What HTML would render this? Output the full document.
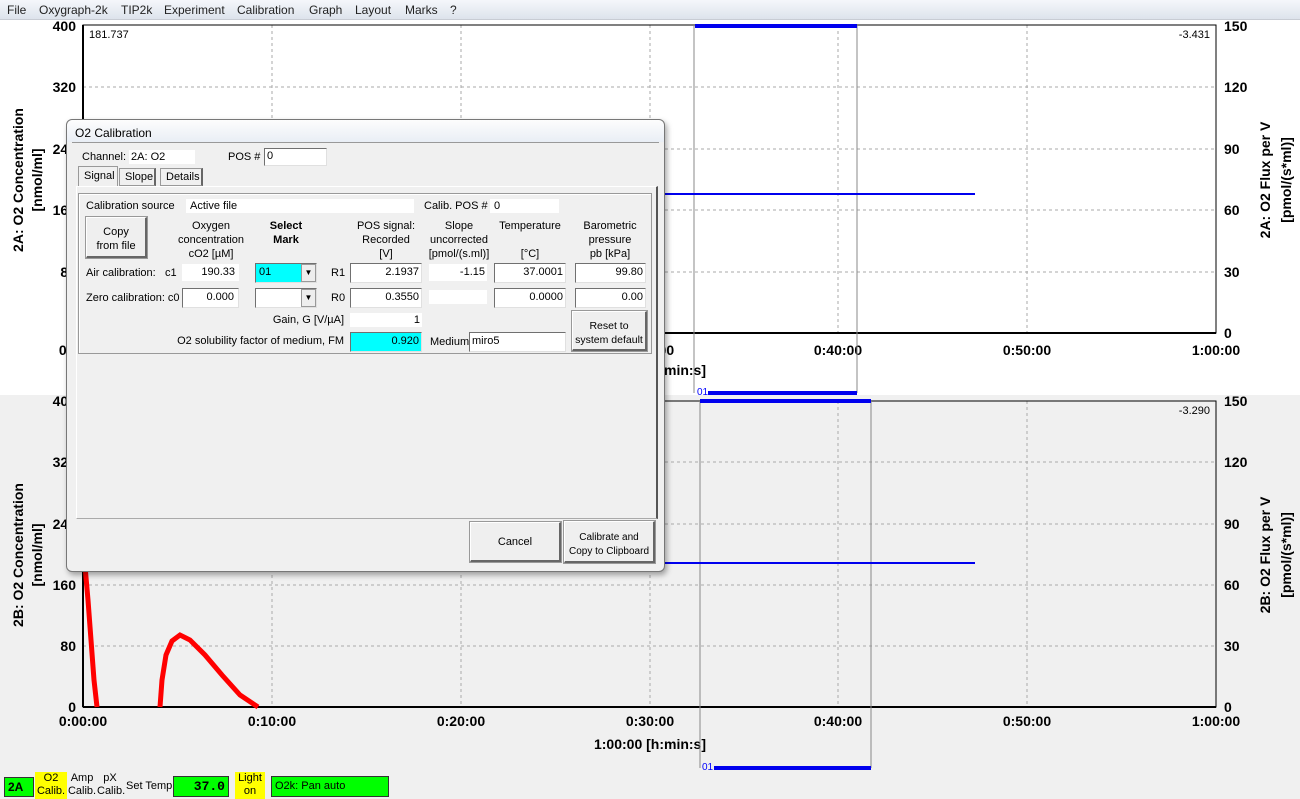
<!DOCTYPE html>
<html><head><meta charset="utf-8"><style>
*{margin:0;padding:0;box-sizing:border-box}
body{width:1300px;height:799px;overflow:hidden;background:#fff;font-family:"Liberation Sans",sans-serif;font-size:11px;position:relative;color:#000}
.a{position:absolute}
.menu{left:0;top:0;width:1300px;height:20px;background:linear-gradient(#f5f7fb,#dde3ec);border-bottom:1px solid #c8ccd4;font-size:12px;color:#222}
.menu span{position:absolute;top:3px}
.dlg{left:66px;top:119px;width:599px;height:453px;background:#f0f0f0;border:1px solid #777;border-radius:6px;box-shadow:2px 3px 6px rgba(0,0,0,.35)}
.tb{background:linear-gradient(#fdfdfd,#e9eef5);}
.w{background:#fff;position:absolute;text-align:right;padding-right:2px;line-height:17px}
.sunk{border-top:1px solid #707070;border-left:1px solid #707070;border-right:1px solid #e0e0e0;border-bottom:1px solid #e0e0e0}
.btn{position:absolute;background:#efefef;border:1px solid #fff;border-right:2px solid #666;border-bottom:2px solid #666;outline:1px solid #999;text-align:center;font-size:11px;white-space:nowrap}
.c{text-align:center;position:absolute;line-height:14px}
</style></head><body>
<div class="a menu">
<span style="left:7px">File</span><span style="left:39px">Oxygraph-2k</span><span style="left:121px">TIP2k</span><span style="left:164px">Experiment</span><span style="left:237px">Calibration</span><span style="left:309px">Graph</span><span style="left:355px">Layout</span><span style="left:405px">Marks</span><span style="left:450px">?</span>
</div>
<svg class="a" style="left:0;top:20px" width="1300" height="779" viewBox="0 20 1300 779">
<rect x="0" y="395" width="1300" height="375" fill="#f0f0f0"/>
<g stroke="#aaa" stroke-dasharray="3,3" stroke-width="1">
<line x1="272" y1="25" x2="272" y2="333"/><line x1="461" y1="25" x2="461" y2="333"/><line x1="650" y1="25" x2="650" y2="333"/><line x1="838" y1="25" x2="838" y2="333"/><line x1="1027" y1="25" x2="1027" y2="333"/>
<line x1="83" y1="87" x2="1216" y2="87"/><line x1="83" y1="149" x2="1216" y2="149"/><line x1="83" y1="210" x2="1216" y2="210"/><line x1="83" y1="272" x2="1216" y2="272"/>
<line x1="272" y1="401" x2="272" y2="707"/><line x1="461" y1="401" x2="461" y2="707"/><line x1="650" y1="401" x2="650" y2="707"/><line x1="838" y1="401" x2="838" y2="707"/><line x1="1027" y1="401" x2="1027" y2="707"/>
<line x1="83" y1="462" x2="1216" y2="462"/><line x1="83" y1="524" x2="1216" y2="524"/><line x1="83" y1="585" x2="1216" y2="585"/><line x1="83" y1="646" x2="1216" y2="646"/>
</g>
<g stroke="#000" fill="none">
<rect x="83" y="25" width="1133" height="308" stroke-width="1"/>
<line x1="83" y1="333" x2="1216" y2="333" stroke-width="2"/>
<rect x="83" y="401" width="1133" height="306" stroke-width="1"/>
<line x1="83" y1="707" x2="1216" y2="707" stroke-width="2"/>
<line x1="83" y1="25" x2="83" y2="333" stroke-width="2"/><line x1="83" y1="401" x2="83" y2="707" stroke-width="2"/>
</g>
<g font-weight="bold" font-size="14" text-anchor="end">
<text x="76" y="31">400</text><text x="76" y="92">320</text><text x="76" y="154">240</text><text x="76" y="215">160</text><text x="76" y="277">80</text><text x="76" y="338">0</text>
<text x="76" y="406">400</text><text x="76" y="467">320</text><text x="76" y="529">240</text><text x="76" y="590">160</text><text x="76" y="651">80</text><text x="76" y="712">0</text>
</g>
<g font-weight="bold" font-size="14">
<text x="1224" y="31">150</text><text x="1224" y="92">120</text><text x="1224" y="154">90</text><text x="1224" y="215">60</text><text x="1224" y="277">30</text><text x="1224" y="338">0</text>
<text x="1224" y="406">150</text><text x="1224" y="467">120</text><text x="1224" y="529">90</text><text x="1224" y="590">60</text><text x="1224" y="651">30</text><text x="1224" y="712">0</text>
</g>
<g font-weight="bold" font-size="14" text-anchor="middle">
<text x="83" y="355">0:00:00</text><text x="650" y="355">0:30:00</text><text x="838" y="355">0:40:00</text><text x="1027" y="355">0:50:00</text><text x="1216" y="355">1:00:00</text>
<text x="650" y="375">1:00:00 [h:min:s]</text>
<text x="83" y="726">0:00:00</text><text x="272" y="726">0:10:00</text><text x="461" y="726">0:20:00</text><text x="650" y="726">0:30:00</text><text x="838" y="726">0:40:00</text><text x="1027" y="726">0:50:00</text><text x="1216" y="726">1:00:00</text>
<text x="650" y="749">1:00:00 [h:min:s]</text>
<text transform="translate(23,180) rotate(-90)">2A: O2 Concentration</text>
<text transform="translate(42,180) rotate(-90)">[nmol/ml]</text>
<text transform="translate(1270,180) rotate(-90)">2A: O2 Flux per V</text>
<text transform="translate(1291,180) rotate(-90)">[pmol/(s*ml)]</text>
<text transform="translate(23,555) rotate(-90)">2B: O2 Concentration</text>
<text transform="translate(42,555) rotate(-90)">[nmol/ml]</text>
<text transform="translate(1270,555) rotate(-90)">2B: O2 Flux per V</text>
<text transform="translate(1291,555) rotate(-90)">[pmol/(s*ml)]</text>
</g>
<text x="89" y="38" font-size="11">181.737</text>
<text x="1210" y="38" font-size="11" text-anchor="end">-3.431</text>
<text x="1210" y="414" font-size="11" text-anchor="end">-3.290</text>
<g stroke="#888" stroke-width="1"><line x1="694" y1="25" x2="694" y2="393"/><line x1="857" y1="25" x2="857" y2="393"/><line x1="700" y1="401" x2="700" y2="768"/><line x1="871" y1="401" x2="871" y2="768"/></g>
<g stroke="#0000ee" stroke-width="4">
<line x1="695" y1="26" x2="857" y2="26"/><line x1="708" y1="393" x2="857" y2="393"/>
<line x1="700" y1="401" x2="871" y2="401"/><line x1="714" y1="768" x2="871" y2="768"/>
</g>
<g stroke="#0000ee" stroke-width="2"><line x1="660" y1="194" x2="975" y2="194"/><line x1="660" y1="563" x2="975" y2="563"/></g>
<text x="697" y="395" font-size="10" fill="#00f">01</text><text x="702" y="770" font-size="10" fill="#00f">01</text>
<g stroke="#f00" stroke-width="5" fill="none">
<path d="M85,566 L88,600 L91,640 L94,680 L97,707"/>
<path d="M160,707 L162,680 L166,655 L172,641 L180,635 L190,640 L205,655 L222,675 L240,695 L258,707"/>
</g>
</svg>
<div class="a" style="left:0;top:770px;width:1300px;height:29px;background:#f0f0f0"></div>
<div class="a" style="left:4px;top:777px;width:30px;height:20px;background:#00ff00;border:1px solid #333;font-weight:bold;font-size:12px;padding:2px 0 0 3px">2A</div>
<div class="a c" style="left:35px;top:772px;width:32px;height:27px;background:#ffff00;line-height:13px;font-size:11px">O2<br>Calib.</div>
<div class="a c" style="left:67px;top:772px;width:30px;line-height:13px;font-size:11px">Amp<br>Calib.</div>
<div class="a c" style="left:97px;top:772px;width:26px;line-height:13px;font-size:11px">pX<br>Calib.</div>
<div class="a" style="left:126px;top:780px;font-size:11px;white-space:nowrap">Set Temp</div>
<div class="a" style="left:173px;top:776px;width:56px;height:21px;background:#00ff00;border:1px solid #333;font-family:'Liberation Mono',monospace;font-weight:bold;font-size:13px;text-align:right;padding:2px 3px 0 0">37.0</div>
<div class="a c" style="left:235px;top:772px;width:30px;height:27px;background:#ffff00;line-height:13px;font-size:11px">Light<br>on</div>
<div class="a" style="left:271px;top:776px;width:118px;height:21px;background:#00ff00;border:1px solid #333;font-size:11px;padding:3px 0 0 3px">O2k: Pan auto</div>

<div class="a dlg">
<div class="a tb" style="left:0;top:0;width:597px;height:22px;border-radius:6px 6px 0 0"></div>
<div class="a" style="left:8px;top:6px;font-size:12px">O2 Calibration</div>
</div>
<div class="a" style="left:72px;top:142px;width:587px;height:1px;background:#999"></div>
<div class="a" style="left:82px;top:151px">Channel:</div>
<div class="w" style="left:129px;top:150px;width:66px;height:14px;text-align:left;line-height:14px;padding-left:2px">2A: O2</div>
<div class="a" style="left:228px;top:151px">POS #</div>
<div class="w sunk" style="left:264px;top:148px;width:63px;height:18px;text-align:left;line-height:15px;padding-left:2px">0</div>
<div class="a" style="left:78px;top:166px;width:40px;height:21px;background:#f0f0f0;border:1px solid #999;border-bottom:none;padding:3px 0 0 5px">Signal</div>
<div class="a" style="left:119px;top:168px;width:37px;height:18px;border:1px solid #999;border-right:2px solid #666;padding:2px 0 0 5px">Slope</div>
<div class="a" style="left:160px;top:168px;width:43px;height:18px;border:1px solid #999;border-right:2px solid #666;padding:2px 0 0 5px">Details</div>
<div class="a" style="left:76px;top:186px;width:582px;height:333px;border-top:1px solid #fff;border-left:1px solid #fff;border-right:2px solid #555;border-bottom:1px solid #aaa"></div>
<div class="a" style="left:78px;top:193px;width:574px;height:161px;border:1px solid #999;box-shadow:inset 1px 1px #fff"></div>
<div class="a" style="left:86px;top:200px">Calibration source</div>
<div class="w" style="left:186px;top:199px;width:228px;height:14px;text-align:left;line-height:14px;padding-left:4px">Active file</div>
<div class="a" style="left:424px;top:200px">Calib. POS #</div>
<div class="w" style="left:490px;top:199px;width:69px;height:14px;text-align:left;line-height:14px;padding-left:4px">0</div>
<div class="btn" style="left:86px;top:217px;width:61px;height:41px;padding-top:7px;line-height:14px">Copy<br>from file</div>
<div class="c" style="left:171px;top:219px;width:80px">Oxygen<br>concentration<br>cO2 [µM]</div>
<div class="c" style="left:256px;top:219px;width:60px;font-weight:bold">Select<br>Mark</div>
<div class="c" style="left:346px;top:219px;width:80px">POS signal:<br>Recorded<br>[V]</div>
<div class="c" style="left:419px;top:219px;width:80px">Slope<br>uncorrected<br>[pmol/(s.ml)]</div>
<div class="c" style="left:490px;top:219px;width:80px">Temperature<br><br>[°C]</div>
<div class="c" style="left:570px;top:219px;width:80px">Barometric<br>pressure<br>pb [kPa]</div>
<div class="a" style="left:86px;top:267px">Air calibration:</div><div class="a" style="left:165px;top:267px">c1</div>
<div class="w" style="left:182px;top:264px;width:57px;height:17px;padding-right:4px">190.33</div>
<div class="a sunk" style="left:255px;top:263px;width:62px;height:20px;background:#fff"><div class="a" style="left:0;top:0;width:45px;height:18px;background:#00ffff;padding:2px 0 0 3px">01</div><div class="a" style="right:0;top:0;width:15px;height:18px;background:#eee;border:1px solid #999;text-align:center;font-size:8px;line-height:16px">▼</div></div>
<div class="a" style="left:331px;top:267px">R1</div>
<div class="w sunk" style="left:350px;top:263px;width:72px;height:20px">2.1937</div>
<div class="w" style="left:429px;top:264px;width:58px;height:17px">-1.15</div>
<div class="w sunk" style="left:494px;top:263px;width:72px;height:20px">37.0001</div>
<div class="w sunk" style="left:575px;top:263px;width:71px;height:20px">99.80</div>
<div class="a" style="left:86px;top:292px">Zero calibration: c0</div>
<div class="w sunk" style="left:182px;top:288px;width:57px;height:20px;padding-right:4px">0.000</div>
<div class="a sunk" style="left:255px;top:288px;width:62px;height:20px;background:#fff"><div class="a" style="right:0;top:0;width:15px;height:18px;background:#eee;border:1px solid #999;text-align:center;font-size:8px;line-height:16px">▼</div></div>
<div class="a" style="left:331px;top:292px">R0</div>
<div class="w sunk" style="left:350px;top:288px;width:72px;height:20px">0.3550</div>
<div class="w" style="left:429px;top:290px;width:58px;height:14px"></div>
<div class="w sunk" style="left:494px;top:288px;width:72px;height:20px">0.0000</div>
<div class="w sunk" style="left:575px;top:288px;width:71px;height:20px">0.00</div>
<div class="a" style="right:956px;top:314px">Gain, G [V/µA]</div>
<div class="w" style="left:350px;top:313px;width:72px;height:14px;line-height:14px">1</div>
<div class="a" style="right:956px;top:335px">O2 solubility factor of medium, FM</div>
<div class="w sunk" style="left:350px;top:332px;width:72px;height:20px;background:#00ffff">0.920</div>
<div class="a" style="left:430px;top:336px">Medium</div>
<div class="w sunk" style="left:469px;top:332px;width:97px;height:20px;text-align:left;padding-left:2px">miro5</div>
<div class="btn" style="left:572px;top:311px;width:75px;height:40px;padding-top:7px;line-height:14px;font-size:10.5px">Reset to<br>system default</div>
<div class="btn" style="left:470px;top:522px;width:91px;height:40px;padding-top:13px">Cancel</div>
<div class="btn" style="left:564px;top:521px;width:91px;height:42px;padding-top:9px;line-height:14px;font-size:10px">Calibrate and<br>Copy to Clipboard</div>
</body></html>
